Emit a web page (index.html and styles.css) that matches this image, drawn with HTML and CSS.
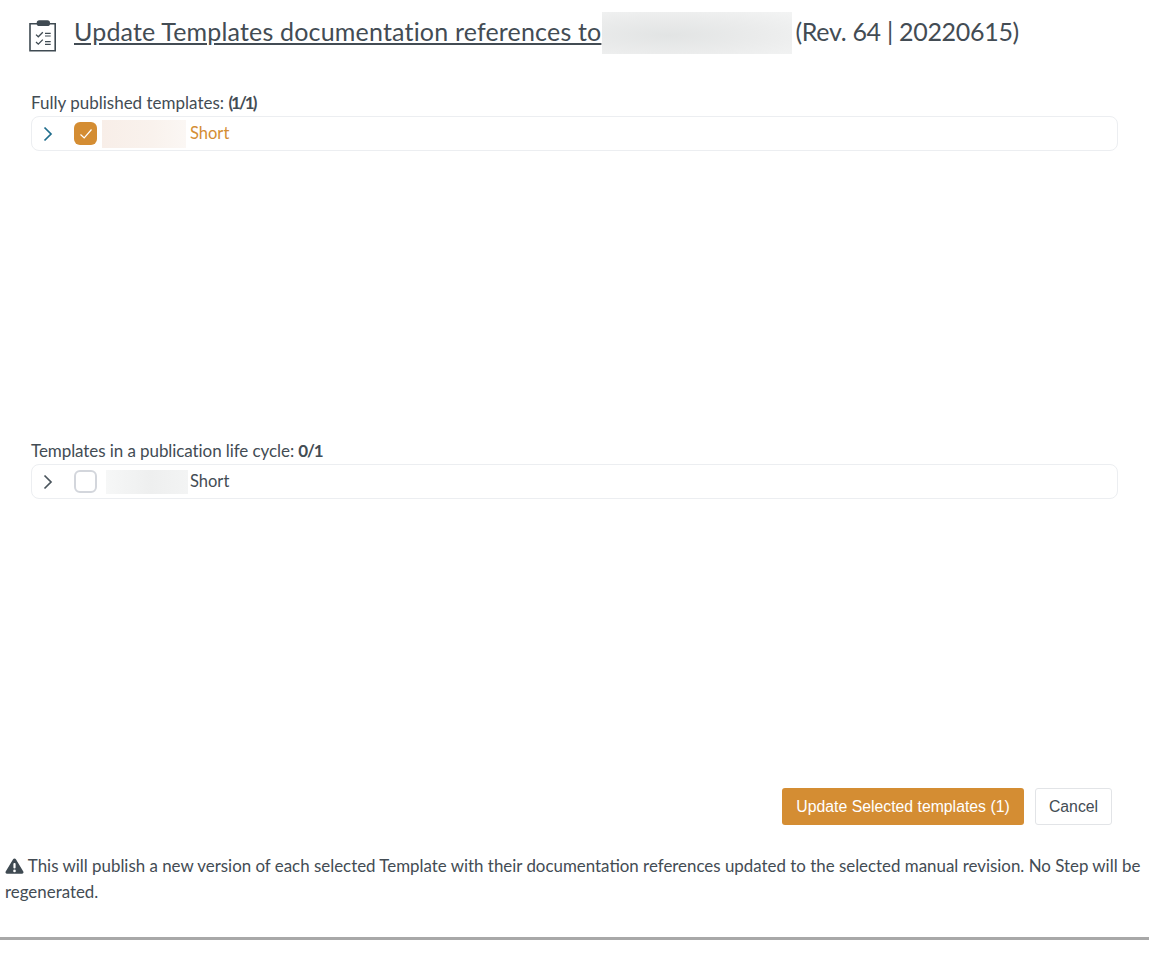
FILE: index.html
```html
<!DOCTYPE html>
<html lang="en">
<head>
    <meta charset="UTF-8">
    <meta name="viewport" content="width=device-width, initial-scale=1.0">
    <title>Update Templates documentation references</title>
    <link rel="stylesheet" href="styles.css">
</head>
<body>

    <div class="page">
        <div class="header">
            <svg class="header-icon" width="30" height="33" viewBox="0 0 30 33" fill="none">
                <path d="M9 3.8H2V30.8H27.2V3.8H21" stroke="#3f4a52" stroke-width="1.6"/>
                <rect x="8.7" y="0.3" width="13.3" height="5.7" rx="2.6" fill="#3f4a52"/>
                <path d="M8 14.6L10.3 16.8L14.8 12.2" stroke="#3f4a52" stroke-width="1.3"/>
                <path d="M8 22L10.3 24.2L14.8 19.6" stroke="#3f4a52" stroke-width="1.3"/>
                <path d="M17 13.3H22.7M17 16H22.7M17 21.7H22.7M17 24.3H22.7" stroke="#3f4a52" stroke-width="1.2"/>
            </svg>
            <h1 class="title"><a href="#">Update Templates documentation references to</a></h1>
            <div class="blur blur-title"></div>
            <span class="title revision">(Rev. 64 | 20220615)</span>
        </div>

        <div class="section section-published">
            <div class="section-label">Fully published templates: <b class="count-wide">(1/1)</b></div>
            <div class="row row-selected">
                <svg class="chevron" width="10" height="16" viewBox="0 0 10 16" fill="none">
                    <path d="M1.5 1.5L8 8L1.5 14.5" stroke="#1f6d8c" stroke-width="1.7"/>
                </svg>
                <span class="checkbox checked">
                    <svg width="14" height="12" viewBox="0 0 14 12" fill="none">
                        <path d="M1.5 6.5L5.2 10L12.5 1.5" stroke="#fff" stroke-width="1.2"/>
                    </svg>
                </span>
                <div class="blur blur-peach"></div>
                <span class="row-name">Short</span>
            </div>
        </div>

        <div class="section section-lifecycle">
            <div class="section-label">Templates in a publication life cycle: <b>0/1</b></div>
            <div class="row">
                <svg class="chevron" width="10" height="16" viewBox="0 0 10 16" fill="none">
                    <path d="M1.5 1.5L8 8L1.5 14.5" stroke="#4a545c" stroke-width="1.7"/>
                </svg>
                <span class="checkbox"></span>
                <div class="blur blur-grey"></div>
                <span class="row-name">Short</span>
            </div>
        </div>

        <div class="actions">
            <button class="btn btn-primary">Update Selected templates (1)</button>
            <button class="btn btn-cancel">Cancel</button>
        </div>

        <p class="note">
            <svg class="warn-icon" width="19" height="16" viewBox="0 0 19 16">
                <path d="M9.5 0.5C10.1 0.5 10.6 0.8 10.9 1.3L18.3 13.6C18.9 14.6 18.2 15.8 17 15.8H2C0.8 15.8 0.1 14.6 0.7 13.6L8.1 1.3C8.4 0.8 8.9 0.5 9.5 0.5Z" fill="#3f4a52"/>
                <rect x="8.4" y="5" width="2.2" height="5.6" rx="1" fill="#fff"/>
                <circle cx="9.5" cy="12.9" r="1.3" fill="#fff"/>
            </svg>
            This will publish a new version of each selected Template with their documentation references updated to the selected manual revision. No Step will be regenerated.
        </p>

        <div class="rule"></div>
    </div>

</body>
</html>
```

FILE: styles.css
```css
* {
    margin: 0;
    padding: 0;
    box-sizing: border-box;
}

body {
    font-family: 'Lato', 'Open Sans', sans-serif;
    color: #434c54;
    background: #fff;
}

.page {
    width: 1149px;
    height: 954px;
}

.header {
    display: flex;
    align-items: center;
    height: 42px;
    margin-top: 12px;
    padding-left: 28px;
}

.header-icon {
    margin-top: 7px;
    margin-right: 16px;
    flex-shrink: 0;
}

.title {
    margin-bottom: 4px;
    font-size: 25px;
    font-weight: 400;
    color: #434c54;
    letter-spacing: 0.18px;
    white-space: nowrap;
}

.title a {
    color: inherit;
}

.revision {
    letter-spacing: -0.3px;
}

.blur {
    flex-shrink: 0;
}

.blur-title {
    width: 190px;
    height: 42px;
    margin-left: 1px;
    margin-right: 3px;
    background: radial-gradient(ellipse at 35% 55%, #e2e4e4 0%, #ebecec 55%, #f3f4f4 100%);
}

.blur-peach {
    width: 84px;
    height: 28px;
    margin-left: 5px;
    background: linear-gradient(90deg, #f8eee8, #f9f2ed 60%, #fbf7f4);
}

.blur-grey {
    width: 82px;
    height: 24px;
    margin-left: 9px;
    margin-right: -2px;
    background: linear-gradient(90deg, #f6f7f7, #eeefef 55%, #f3f4f4);
}

.section {
    padding-left: 31px;
    padding-right: 31px;
}

.section-published {
    margin-top: 39px;
}

.section-lifecycle {
    margin-top: 290px;
}

.section-label {
    font-size: 17px;
    line-height: 20px;
    margin-bottom: 3px;
}

.section-lifecycle .section-label {
    letter-spacing: -0.08px;
}

.section-label b {
    font-weight: 700;
    letter-spacing: -1.2px;
}

.section-label .count-wide {
    letter-spacing: -2px;
}

.row {
    display: flex;
    align-items: center;
    height: 35px;
    padding-left: 11px;
    border: 1px solid #eceef1;
    border-radius: 8px;
    font-size: 16.5px;
}

.chevron {
    flex-shrink: 0;
    margin-right: 21px;
}

.checkbox {
    display: flex;
    align-items: center;
    justify-content: center;
    width: 23px;
    height: 23px;
    flex-shrink: 0;
    border: 2px solid #d3d6dc;
    border-radius: 6px;
    background: #fff;
}

.checkbox.checked {
    border: none;
    background: #d48d33;
}

.row-name {
    margin-left: 4px;
    margin-bottom: 2px;
}

.row-selected .row-name {
    color: #d48d33;
}

.actions {
    display: flex;
    justify-content: flex-end;
    gap: 11px;
    margin-top: 289px;
    padding-right: 37px;
}

.btn {
    height: 37px;
    font-family: 'Liberation Sans', Arial, sans-serif;
    font-size: 15.8px;
    border-radius: 3px;
    cursor: pointer;
}

.btn-primary {
    width: 242px;
    color: #fff;
    background: #d48d33;
    border: none;
}

.btn-cancel {
    width: 77px;
    color: #434c54;
    background: #fff;
    border: 1px solid #e2e4e7;
}

.note {
    margin-top: 28px;
    padding: 0 5px;
    font-size: 16.9px;
    line-height: 26px;
}

.warn-icon {
    vertical-align: -2px;
}

.rule {
    height: 3px;
    margin-top: 32px;
    background: #a8a8a8;
}
```
